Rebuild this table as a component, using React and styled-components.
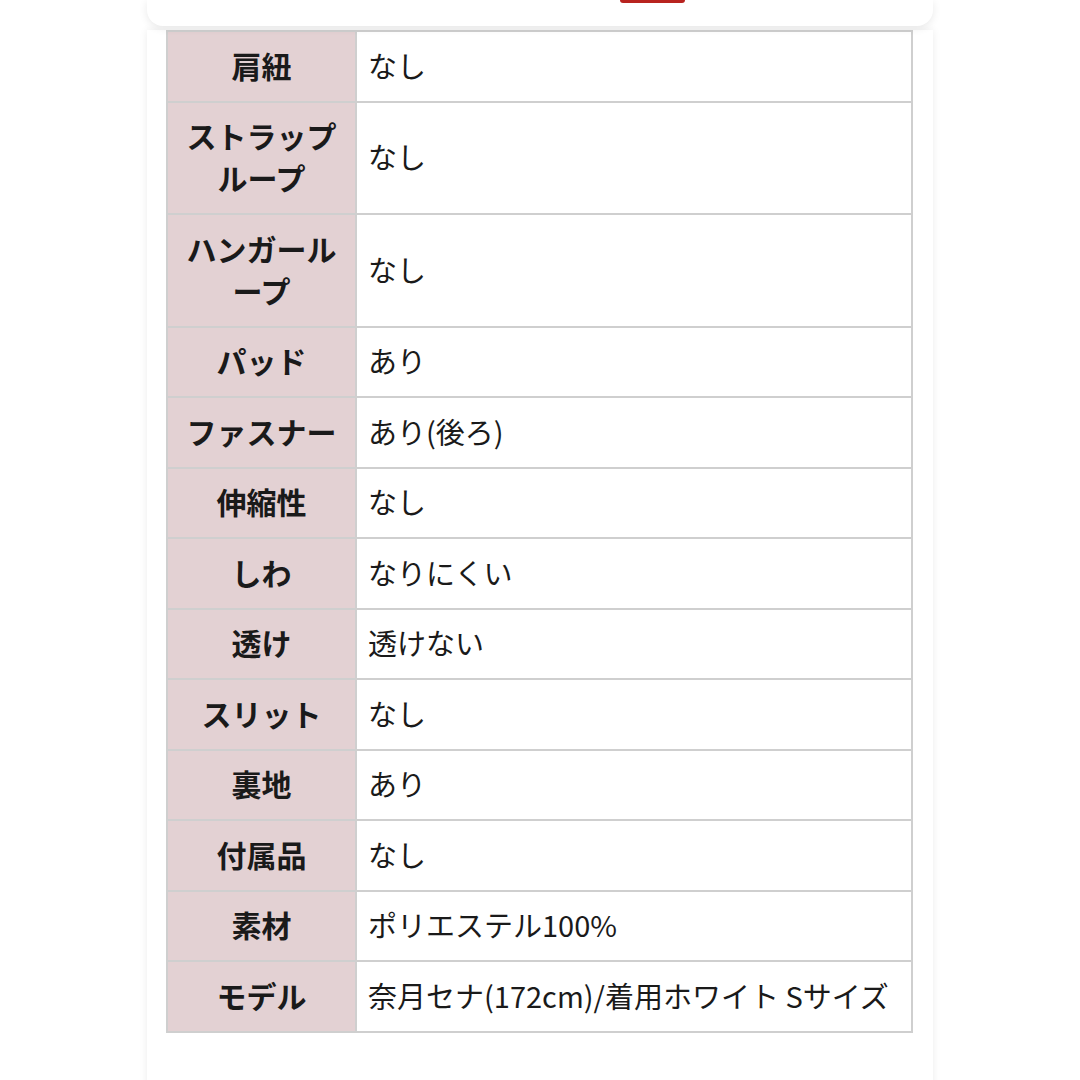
import React from "react";
import styled, { createGlobalStyle } from "styled-components";

const GlobalStyle = createGlobalStyle`
  html, body {
    margin: 0;
    padding: 0;
    background: #ffffff;
    font-family: "Noto Sans CJK JP", "Noto Sans", sans-serif;
    color: #1a1a1a;
  }
  body { overflow: hidden; }
  *, *::before, *::after { box-sizing: border-box; }
`;

const Page = styled.div`
  width: 1080px;
  height: 1080px;
  overflow: hidden;
  display: flex;
  flex-direction: column;
  align-items: center;
`;

const Column = styled.div`
  width: 786px;
  display: flex;
  flex-direction: column;
`;

const TopCard = styled.div`
  height: 26px;
  background: #ffffff;
  border-radius: 0 0 16px 16px;
  box-shadow: 0 2px 8px rgba(0, 0, 0, 0.09);
  display: flex;
  align-items: flex-start;
  padding-left: 473px;
  position: relative;
  z-index: 1;
`;

const RedButton = styled.div`
  width: 65px;
  height: 3px;
  background: #b8231f;
  border-radius: 0 0 5px 5px;
`;

const Panel = styled.div`
  margin-top: 4px;
  background: #ffffff;
  box-shadow: 0 0 8px rgba(0, 0, 0, 0.08);
  padding: 0 20px 60px 19px;
  min-height: 1100px;
`;

const Table = styled.table`
  width: 747px;
  border-collapse: collapse;
  border: 2px solid #cfcfcf;
  table-layout: fixed;
`;

const HeadCell = styled.th`
  width: 189px;
  background: #e3d1d3;
  border: 2px solid #cfcfcf;
  padding: 11.5px 10px 15px;
  font-size: 30px;
  font-weight: 700;
  line-height: 42px;
  text-align: center;
  vertical-align: middle;
  color: #1a1a1a;
`;

const ValueCell = styled.td`
  background: #ffffff;
  border: 2px solid #cfcfcf;
  padding: 11.5px 12px 15px 11px;
  font-size: 29px;
  font-weight: 400;
  line-height: 42px;
  text-align: left;
  vertical-align: middle;
  color: #1a1a1a;
`;

const rows = [
  ["肩紐", "なし"],
  ["ストラップループ", "なし"],
  ["ハンガーループ", "なし"],
  ["パッド", "あり"],
  ["ファスナー", "あり(後ろ)"],
  ["伸縮性", "なし"],
  ["しわ", "なりにくい"],
  ["透け", "透けない"],
  ["スリット", "なし"],
  ["裏地", "あり"],
  ["付属品", "なし"],
  ["素材", "ポリエステル100%"],
  ["モデル", "奈月セナ(172cm)/着用ホワイト Sサイズ"],
];

export default function App() {
  return (
    <>
      <GlobalStyle />
      <Page>
        <Column>
          <TopCard>
            <RedButton />
          </TopCard>
          <Panel>
            <Table>
              <tbody>
                {rows.map(([k, v]) => (
                  <tr key={k}>
                    <HeadCell>{k}</HeadCell>
                    <ValueCell>{v}</ValueCell>
                  </tr>
                ))}
              </tbody>
            </Table>
          </Panel>
        </Column>
      </Page>
    </>
  );
}
